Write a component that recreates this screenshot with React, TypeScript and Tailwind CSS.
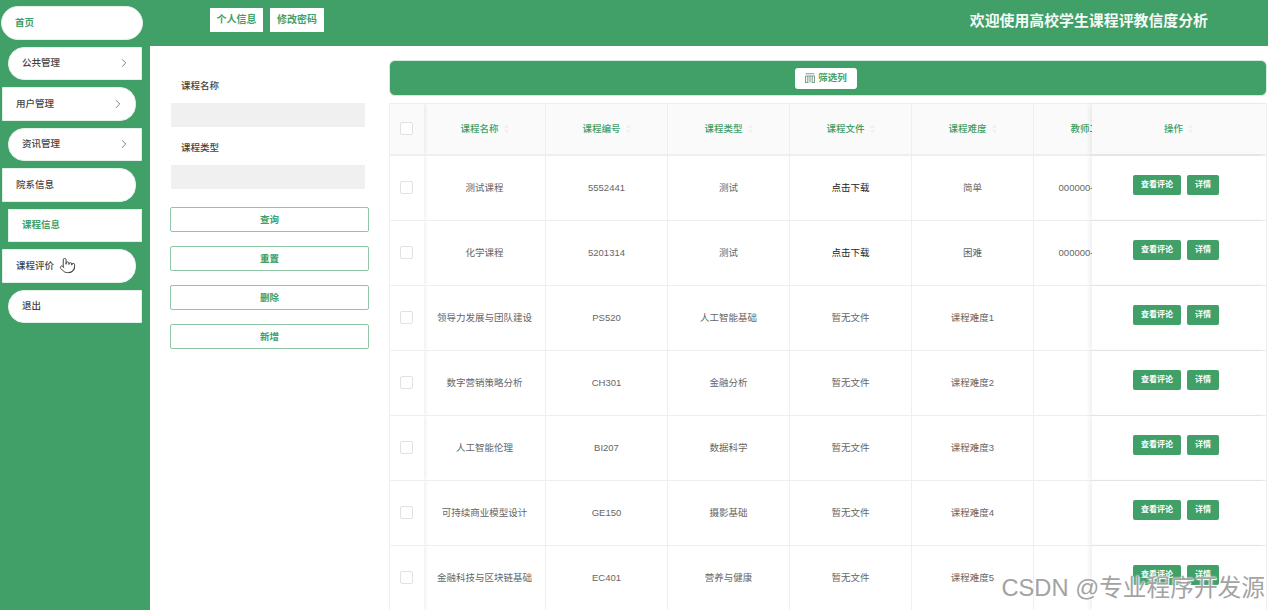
import { ChevronRight, Pointer } from "lucide-react"

const rows = [
  { name: "测试课程", code: "5552441", type: "测试", file: "点击下载", level: "简单", teacher: "000000-0000000" },
  { name: "化学课程", code: "5201314", type: "测试", file: "点击下载", level: "困难", teacher: "000000-0000000" },
  { name: "领导力发展与团队建设", code: "PS520", type: "人工智能基础", file: "暂无文件", level: "课程难度1", teacher: "" },
  { name: "数字营销策略分析", code: "CH301", type: "金融分析", file: "暂无文件", level: "课程难度2", teacher: "" },
  { name: "人工智能伦理", code: "BI207", type: "数据科学", file: "暂无文件", level: "课程难度3", teacher: "" },
  { name: "可持续商业模型设计", code: "GE150", type: "摄影基础", file: "暂无文件", level: "课程难度4", teacher: "" },
  { name: "金融科技与区块链基础", code: "EC401", type: "营养与健康", file: "暂无文件", level: "课程难度5", teacher: "" },
]

function SortCaret() {
  return (
    <svg width="5" height="10" viewBox="0 0 5 10" className="ml-[5px] shrink-0" fill="#eef0f2">
      <path d="M2.5 0.5 L5 4 H0 Z" />
      <path d="M2.5 9.5 L0 6 H5 Z" />
    </svg>
  )
}

function Checkbox() {
  return <div className="h-[13px] w-[13px] rounded-[2px] border border-[#dfe1e4] bg-white" />
}

function HeaderCell({ label }: { label: string }) {
  return (
    <div className="flex h-full w-[122px] shrink-0 items-center justify-center border-r border-[#eeeff1]">
      <span className="whitespace-nowrap font-medium">{label}</span>
      <SortCaret />
    </div>
  )
}

function Cell({ children, dark }: { children: string; dark?: boolean }) {
  return (
    <div className={`flex h-full w-[122px] shrink-0 items-center justify-center overflow-hidden whitespace-nowrap border-r border-[#eeeff1] ${dark ? "text-[#222]" : ""}`}>
      {children}
    </div>
  )
}

function SideItem({ label, shape, arrow, active, hand }: { label: string; shape: string; arrow?: boolean; active?: boolean; hand?: boolean }) {
  return (
    <div className={`flex h-[33.5px] shrink-0 items-center justify-between border border-[#e4f1ea] bg-white pl-[13px] ${active ? "text-[#419f68]" : "text-[#444]"} ${shape}`}>
      <span className={`flex items-center ${active ? "font-bold" : "font-medium"}`}>
        {label}
        {hand && <Pointer size={17} strokeWidth={1.4} className="ml-[5px] text-[#444]" />}
      </span>
      {arrow && <ChevronRight size={14} strokeWidth={1.4} className="mr-[10px] text-[#666]" />}
    </div>
  )
}

export default function App() {
  return (
    <div className="relative flex h-screen w-full overflow-hidden bg-white font-['Liberation_Sans','Noto_Sans_CJK_SC',sans-serif] text-[9.5px] leading-[14px]">
      {/* 侧边栏 */}
      <aside className="flex w-[150px] shrink-0 flex-col gap-[7px] bg-[#419f68] pt-[6px]">
        <SideItem label="首页" shape="ml-[1px] mr-[7px] rounded-full" active />
        <SideItem label="公共管理" shape="ml-[8px] mr-[8px] rounded-l-[16px]" arrow />
        <SideItem label="用户管理" shape="ml-[2px] mr-[14px] rounded-r-[16px]" arrow />
        <SideItem label="资讯管理" shape="ml-[8px] mr-[8px] rounded-l-[16px]" arrow />
        <SideItem label="院系信息" shape="ml-[2px] mr-[14px] rounded-r-[16px]" />
        <SideItem label="课程信息" shape="ml-[8px] mr-[8px]" active />
        <SideItem label="课程评价" shape="ml-[2px] mr-[14px] rounded-r-[16px]" hand />
        <SideItem label="退出" shape="ml-[8px] mr-[8px] rounded-l-[16px]" />
      </aside>

      <div className="flex min-w-0 flex-1 flex-col">
        {/* 顶部 */}
        <header className="flex h-[46px] shrink-0 items-center justify-between bg-[#419f68] pl-[60px] pr-[60px]">
          <div className="mb-[6px] flex gap-[7px]">
            <button className="h-[24px] w-[53px] bg-white text-[10px] font-bold text-[#419f68]">个人信息</button>
            <button className="h-[24px] w-[54px] bg-white text-[10px] font-bold text-[#419f68]">修改密码</button>
          </div>
          <h1 className="mb-[5px] text-[14.9px] font-bold text-[#f4faf6]">欢迎使用高校学生课程评教信度分析</h1>
        </header>

        <div className="flex min-h-0 flex-1">
          {/* 搜索 */}
          <section className="flex w-[239px] shrink-0 flex-col pl-[20px] pt-[33px] text-[#444]">
            <label className="mb-[10px] ml-[11px] font-medium">课程名称</label>
            <div className="ml-[1px] h-[24px] w-[194px] bg-[#f0f0f0]" />
            <label className="mb-[10px] ml-[11px] mt-[14px] font-medium">课程类型</label>
            <div className="ml-[1px] h-[24px] w-[194px] bg-[#f0f0f0]" />
            <div className="mt-[18px] flex w-[199px] flex-col gap-[14px]">
              {["查询", "重置", "删除", "新增"].map((t) => (
                <button key={t} className="h-[25px] rounded-[2px] border border-[#8fc7a6] bg-white font-bold text-[#419f68]">
                  {t}
                </button>
              ))}
            </div>
          </section>

          {/* 列表 */}
          <section className="flex min-w-0 flex-1 flex-col pr-[1px] pt-[14px]">
            <div className="flex h-[36px] shrink-0 items-center justify-center rounded-[6px] border border-[#d5eadd] bg-[#419f68]">
              <button className="mr-[4px] flex h-[21px] w-[62px] items-center justify-center gap-[3px] rounded-[3px] bg-white text-[9.5px] font-bold text-[#419f68]">
                <svg width="10" height="10" viewBox="0 0 10 10" fill="none" stroke="#7f9f8d" strokeWidth="1.1">
                  <path d="M0.5 0.8 H9.5 M0.5 3 H9.5 V9.5 H7.2 V3 M2.8 3 V9.5 H0.5 V3 M5 3 V9.5" />
                </svg>
                筛选列
              </button>
            </div>

            <div className="mt-[7px] min-h-0 flex-1 border border-b-0 border-[#eeeff1] text-[#666]">
              <div className="flex h-[52px] border-b-2 border-[#eeeff1] bg-[#fafafa] text-[#419f68]">
                <div className="flex min-w-0 flex-1 overflow-hidden">
                  <div className="relative z-10 flex h-full w-[34px] shrink-0 items-center justify-center pb-[1px] pr-[1px] shadow-[2px_0_3px_rgba(0,0,0,0.06)]">
                    <Checkbox />
                  </div>
                  <HeaderCell label="课程名称" />
                  <HeaderCell label="课程编号" />
                  <HeaderCell label="课程类型" />
                  <HeaderCell label="课程文件" />
                  <HeaderCell label="课程难度" />
                  <HeaderCell label="教师工号" />
                </div>
                <div className="relative z-10 flex w-[174px] shrink-0 items-center justify-center bg-[#fafafa] pr-[1px] shadow-[-3px_0_4px_rgba(0,0,0,0.06)]">
                  <span className="font-medium">操作</span>
                  <SortCaret />
                </div>
              </div>

              {rows.map((r) => (
                <div key={r.code} className="flex h-[65px] border-b border-[#eeeff1]">
                  <div className="flex min-w-0 flex-1 overflow-hidden">
                    <div className="relative z-10 flex h-full w-[34px] shrink-0 items-center justify-center bg-white pb-[2px] pr-[1px] shadow-[2px_0_3px_rgba(0,0,0,0.06)]">
                      <Checkbox />
                    </div>
                    <Cell>{r.name}</Cell>
                    <Cell>{r.code}</Cell>
                    <Cell>{r.type}</Cell>
                    <Cell dark={r.file === "点击下载"}>{r.file}</Cell>
                    <Cell>{r.level}</Cell>
                    <Cell>{r.teacher}</Cell>
                  </div>
                  <div className="relative z-10 flex w-[174px] shrink-0 items-center justify-center gap-[6px] bg-white pb-[7px] pr-[6px] shadow-[-3px_0_4px_rgba(0,0,0,0.06)]">
                    <button className="h-[20px] w-[48px] rounded-[2px] bg-[#419f68] text-[8px] font-bold text-white">查看评论</button>
                    <button className="h-[20px] w-[32px] rounded-[2px] bg-[#419f68] text-[8px] font-bold text-white">详情</button>
                  </div>
                </div>
              ))}
            </div>
          </section>
        </div>
      </div>

      {/* 水印 */}
      <div className="absolute bottom-[7px] right-[3px] z-20 whitespace-nowrap text-[23.7px] leading-[30px] text-[#a3a3a3] [text-shadow:0_0_2px_#fff,0_0_2px_#fff,1px_1px_1px_#fff]">
        CSDN @专业程序开发源
      </div>
    </div>
  )
}
